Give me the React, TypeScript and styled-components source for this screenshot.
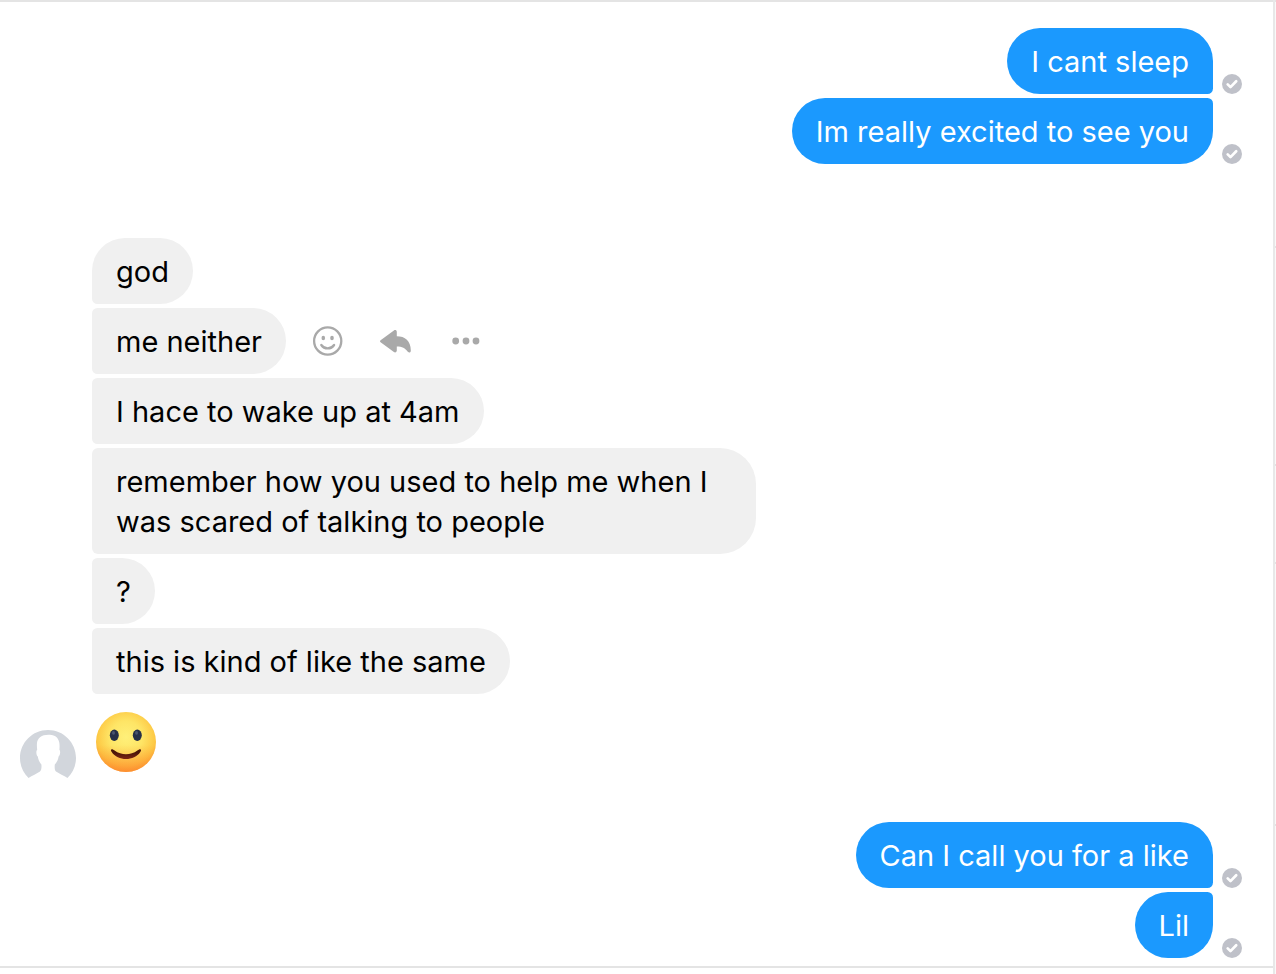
import React from "react";
import styled, { createGlobalStyle, css } from "styled-components";

const GlobalStyle = createGlobalStyle`
  *, *::before, *::after { box-sizing: border-box; }
  body {
    margin: 0;
    background: #ffffff;
    font-family: Inter, "Liberation Sans", sans-serif;
  }
`;

const Page = styled.div`
  display: flex;
  min-height: 100vh;
`;

const Conversation = styled.main`
  flex: 1;
  min-width: 0;
  border-right: 2px solid #e8e8e8;
`;

const Thread = styled.section`
  display: flex;
  flex-direction: column;
  padding: 26px 31px 8px 20px;
  border-top: 2px solid #e4e4e4;
  border-bottom: 2px solid #e4e4e4;
`;

const SidePanel = styled.aside`
  display: flex;
  flex-direction: column;
  width: 1px;
  border-top: 2px solid #e4e4e4;
  background: #f9f9f9;
`;

const PanelSection = styled.div<{ $height: number }>`
  height: ${(p) => p.$height}px;
  border-bottom: 2px solid #e4e4e4;
`;

const OutgoingGroup = styled.div`
  display: flex;
  flex-direction: column;
  gap: 4px;
`;

const OutgoingRow = styled.div`
  display: flex;
  justify-content: flex-end;
  align-items: flex-end;
  gap: 9px;
`;

const IncomingGroup = styled.div`
  display: flex;
  align-items: flex-end;
  gap: 16px;
  margin: 74px 0 36px;
`;

const IncomingMessages = styled.div`
  display: flex;
  flex-direction: column;
  gap: 4px;
  min-width: 0;
`;

const IncomingRow = styled.div`
  display: flex;
  align-items: center;
  gap: 26px;
`;

type Place = "first" | "middle" | "last";

const incomingCorners = {
  first: "36px 36px 36px 6px",
  middle: "6px 36px 36px 6px",
  last: "6px 36px 36px 6px",
};

const outgoingCorners = {
  first: "36px 36px 6px 36px",
  middle: "36px 6px 6px 36px",
  last: "36px 6px 36px 36px",
};

const Bubble = styled.p<{ $own?: boolean; $place: Place }>`
  max-width: 664px;
  margin: 0;
  padding: 14px 24px 12px;
  font-size: 29px;
  line-height: 40px;
  ${(p) =>
    p.$own
      ? css`
          color: #ffffff;
          background: #1b99fe;
          border-radius: ${outgoingCorners[p.$place]};
        `
      : css`
          color: #000000;
          background: #f0f0f0;
          border-radius: ${incomingCorners[p.$place]};
        `}
`;

const Actions = styled.div`
  display: flex;
  align-items: center;
  gap: 36px;
`;

const ActionButton = styled.button`
  display: flex;
  padding: 0;
  border: 0;
  background: none;
  color: #a9a9a9;
  cursor: pointer;
`;

const EmojiMessage = styled.div`
  display: flex;
  padding: 14px 4px;
`;

const Avatar = styled.svg`
  flex: none;
  display: block;
`;

const Status = styled.svg`
  flex: none;
  display: block;
`;

const Delivered = () => (
  <Status width="20" height="20" viewBox="0 0 20 20" role="img" aria-label="Delivered">
    <circle cx="10" cy="10" r="10" fill="#bfc1c9" />
    <path
      d="M5.7 10.4 8.5 13.1 14.2 7.3"
      fill="none"
      stroke="#fff"
      strokeWidth="2.7"
      strokeLinecap="round"
      strokeLinejoin="round"
    />
  </Status>
);

const MessageActions = () => (
  <Actions>
    <ActionButton type="button" aria-label="React">
      <svg width="32" height="32" viewBox="0 0 32 32" fill="none" stroke="currentColor">
        <circle cx="15.7" cy="16" r="13.6" strokeWidth="2.3" />
        <ellipse cx="11.3" cy="13" rx="1.8" ry="2.3" fill="currentColor" stroke="none" />
        <ellipse cx="20" cy="13" rx="1.8" ry="2.3" fill="currentColor" stroke="none" />
        <path d="M9.3 20c3 4.500 9.800 4.500 12.800 0" strokeWidth="2.3" strokeLinecap="round" />
      </svg>
    </ActionButton>
    <ActionButton type="button" aria-label="Reply">
      <svg width="32" height="32" viewBox="0 0 32 32" fill="currentColor">
        <path d="M.6 15.2 13.9 5.500c1.300-.9 2.900-.2 2.900 1.400v4.400c8.200 0 14 4.600 14 14.200 0 2.400-1.800 2.500-3 1.200-2.600-3.600-5.600-5.300-11-5.300v4.200c0 1.600-1.600 2.300-2.900 1.400L.6 17.300c-.8-.6-.8-1.500 0-2.100z" />
      </svg>
    </ActionButton>
    <ActionButton type="button" aria-label="More">
      <svg width="36" height="32" viewBox="0 0 36 32" fill="currentColor">
        <circle cx="7.7" cy="16" r="3.4" />
        <circle cx="18" cy="16" r="3.4" />
        <circle cx="28" cy="16" r="3.4" />
      </svg>
    </ActionButton>
  </Actions>
);

const SmileEmoji = () => (
  <svg width="60" height="60" viewBox="0 0 60 60" role="img" aria-label="Slightly smiling face">
    <defs>
      <radialGradient id="face" cx="50%" cy="42%" r="60%">
        <stop offset="0" stopColor="#fff07a" />
        <stop offset="0.45" stopColor="#fee566" />
        <stop offset="0.8" stopColor="#fdc945" />
        <stop offset="1" stopColor="#faa535" />
      </radialGradient>
      <linearGradient id="glow" x1="0" y1="0" x2="0" y2="1">
        <stop offset="0.55" stopColor="#ff8a2b" stopOpacity="0" />
        <stop offset="1" stopColor="#ff7a2b" stopOpacity="0.6" />
      </linearGradient>
      <linearGradient id="mouth" x1="0" y1="0" x2="0" y2="1">
        <stop offset="0.3" stopColor="#4a1508" />
        <stop offset="1" stopColor="#7c2415" />
      </linearGradient>
    </defs>
    <circle cx="30" cy="30" r="30" fill="url(#face)" />
    <circle cx="30" cy="30" r="30" fill="url(#glow)" />
    <ellipse cx="18.3" cy="23.3" rx="4.5" ry="5.7" fill="#273048" />
    <ellipse cx="41.3" cy="23.3" rx="4.5" ry="5.7" fill="#273048" />
    <ellipse cx="17.5" cy="20.8" rx="1.5" ry="1.9" fill="#4a5570" />
    <ellipse cx="40.5" cy="20.8" rx="1.5" ry="1.9" fill="#4a5570" />
    <path
      d="M15.300 37.400c1-.5 2.100.4 3.300 1.200 6.800 5 16 5 22.800 0 1.200-.8 2.300-1.700 3.300-1.200.7.400.3 1.500-.4 2.600-6 9.400-22.600 9.400-28.600 0-.7-1.100-1.100-2.200-.4-2.600z"
      fill="url(#mouth)"
    />
  </svg>
);

const PersonAvatar = () => (
  <Avatar width="56" height="56" viewBox="0 0 56 56" role="img" aria-label="Contact">
    <path
      d="M8.500 48C3.200 42.900 0 35.800 0 28 0 12.500 12.500 0 28 0s28 12.500 28 28c0 7.800-3.200 14.900-8.500 20C44 45.400 39 43.800 36 41.500 34.600 40.200 34.500 37.500 34.800 34.500 37 32.200 38.200 29.500 38.600 26.600 40.200 25.500 40.700 21 39.400 19.800 39.800 15.500 39.700 11.500 37.600 8.600 36.600 6.300 32.500 4.800 28.500 4.800 21.500 4.800 17.500 8.200 17 13 16.800 15.500 16.900 17.500 17.200 19.800 15.800 21 16.300 25.500 17.800 26.600 18.200 29.500 19.400 32.200 21.400 34.500 21.700 37.500 21.400 40.200 20 41.500 17 43.800 12 45.400 8.500 48z"
      fill="#d2d6dc"
    />
  </Avatar>
);

const incoming: { text: string; place: Place; active?: boolean }[] = [
  { text: "god", place: "first" },
  { text: "me neither", place: "middle", active: true },
  { text: "I hace to wake up at 4am", place: "middle" },
  {
    text: "remember how you used to help me when I was scared of talking to people",
    place: "middle",
  },
  { text: "?", place: "middle" },
  { text: "this is kind of like the same", place: "last" },
];

const Outgoing = ({ text, place }: { text: string; place: Place }) => (
  <OutgoingRow>
    <Bubble $own $place={place}>
      {text}
    </Bubble>
    <Delivered />
  </OutgoingRow>
);

export default function App() {
  return (
    <>
      <GlobalStyle />
      <Page>
        <Conversation>
          <Thread aria-label="Conversation">
            <OutgoingGroup>
              <Outgoing text="I cant sleep" place="first" />
              <Outgoing text="Im really excited to see you" place="last" />
            </OutgoingGroup>
            <IncomingGroup>
              <PersonAvatar />
              <IncomingMessages>
                {incoming.map((m) => (
                  <IncomingRow key={m.text}>
                    <Bubble $place={m.place}>{m.text}</Bubble>
                    {m.active && <MessageActions />}
                  </IncomingRow>
                ))}
                <EmojiMessage>
                  <SmileEmoji />
                </EmojiMessage>
              </IncomingMessages>
            </IncomingGroup>
            <OutgoingGroup>
              <Outgoing text="Can I call you for a like" place="first" />
              <Outgoing text="Lil" place="last" />
            </OutgoingGroup>
          </Thread>
        </Conversation>
        <SidePanel>
          <PanelSection $height={246} />
          <PanelSection $height={218} />
          <PanelSection $height={98} />
          <PanelSection $height={262} />
        </SidePanel>
      </Page>
    </>
  );
}
